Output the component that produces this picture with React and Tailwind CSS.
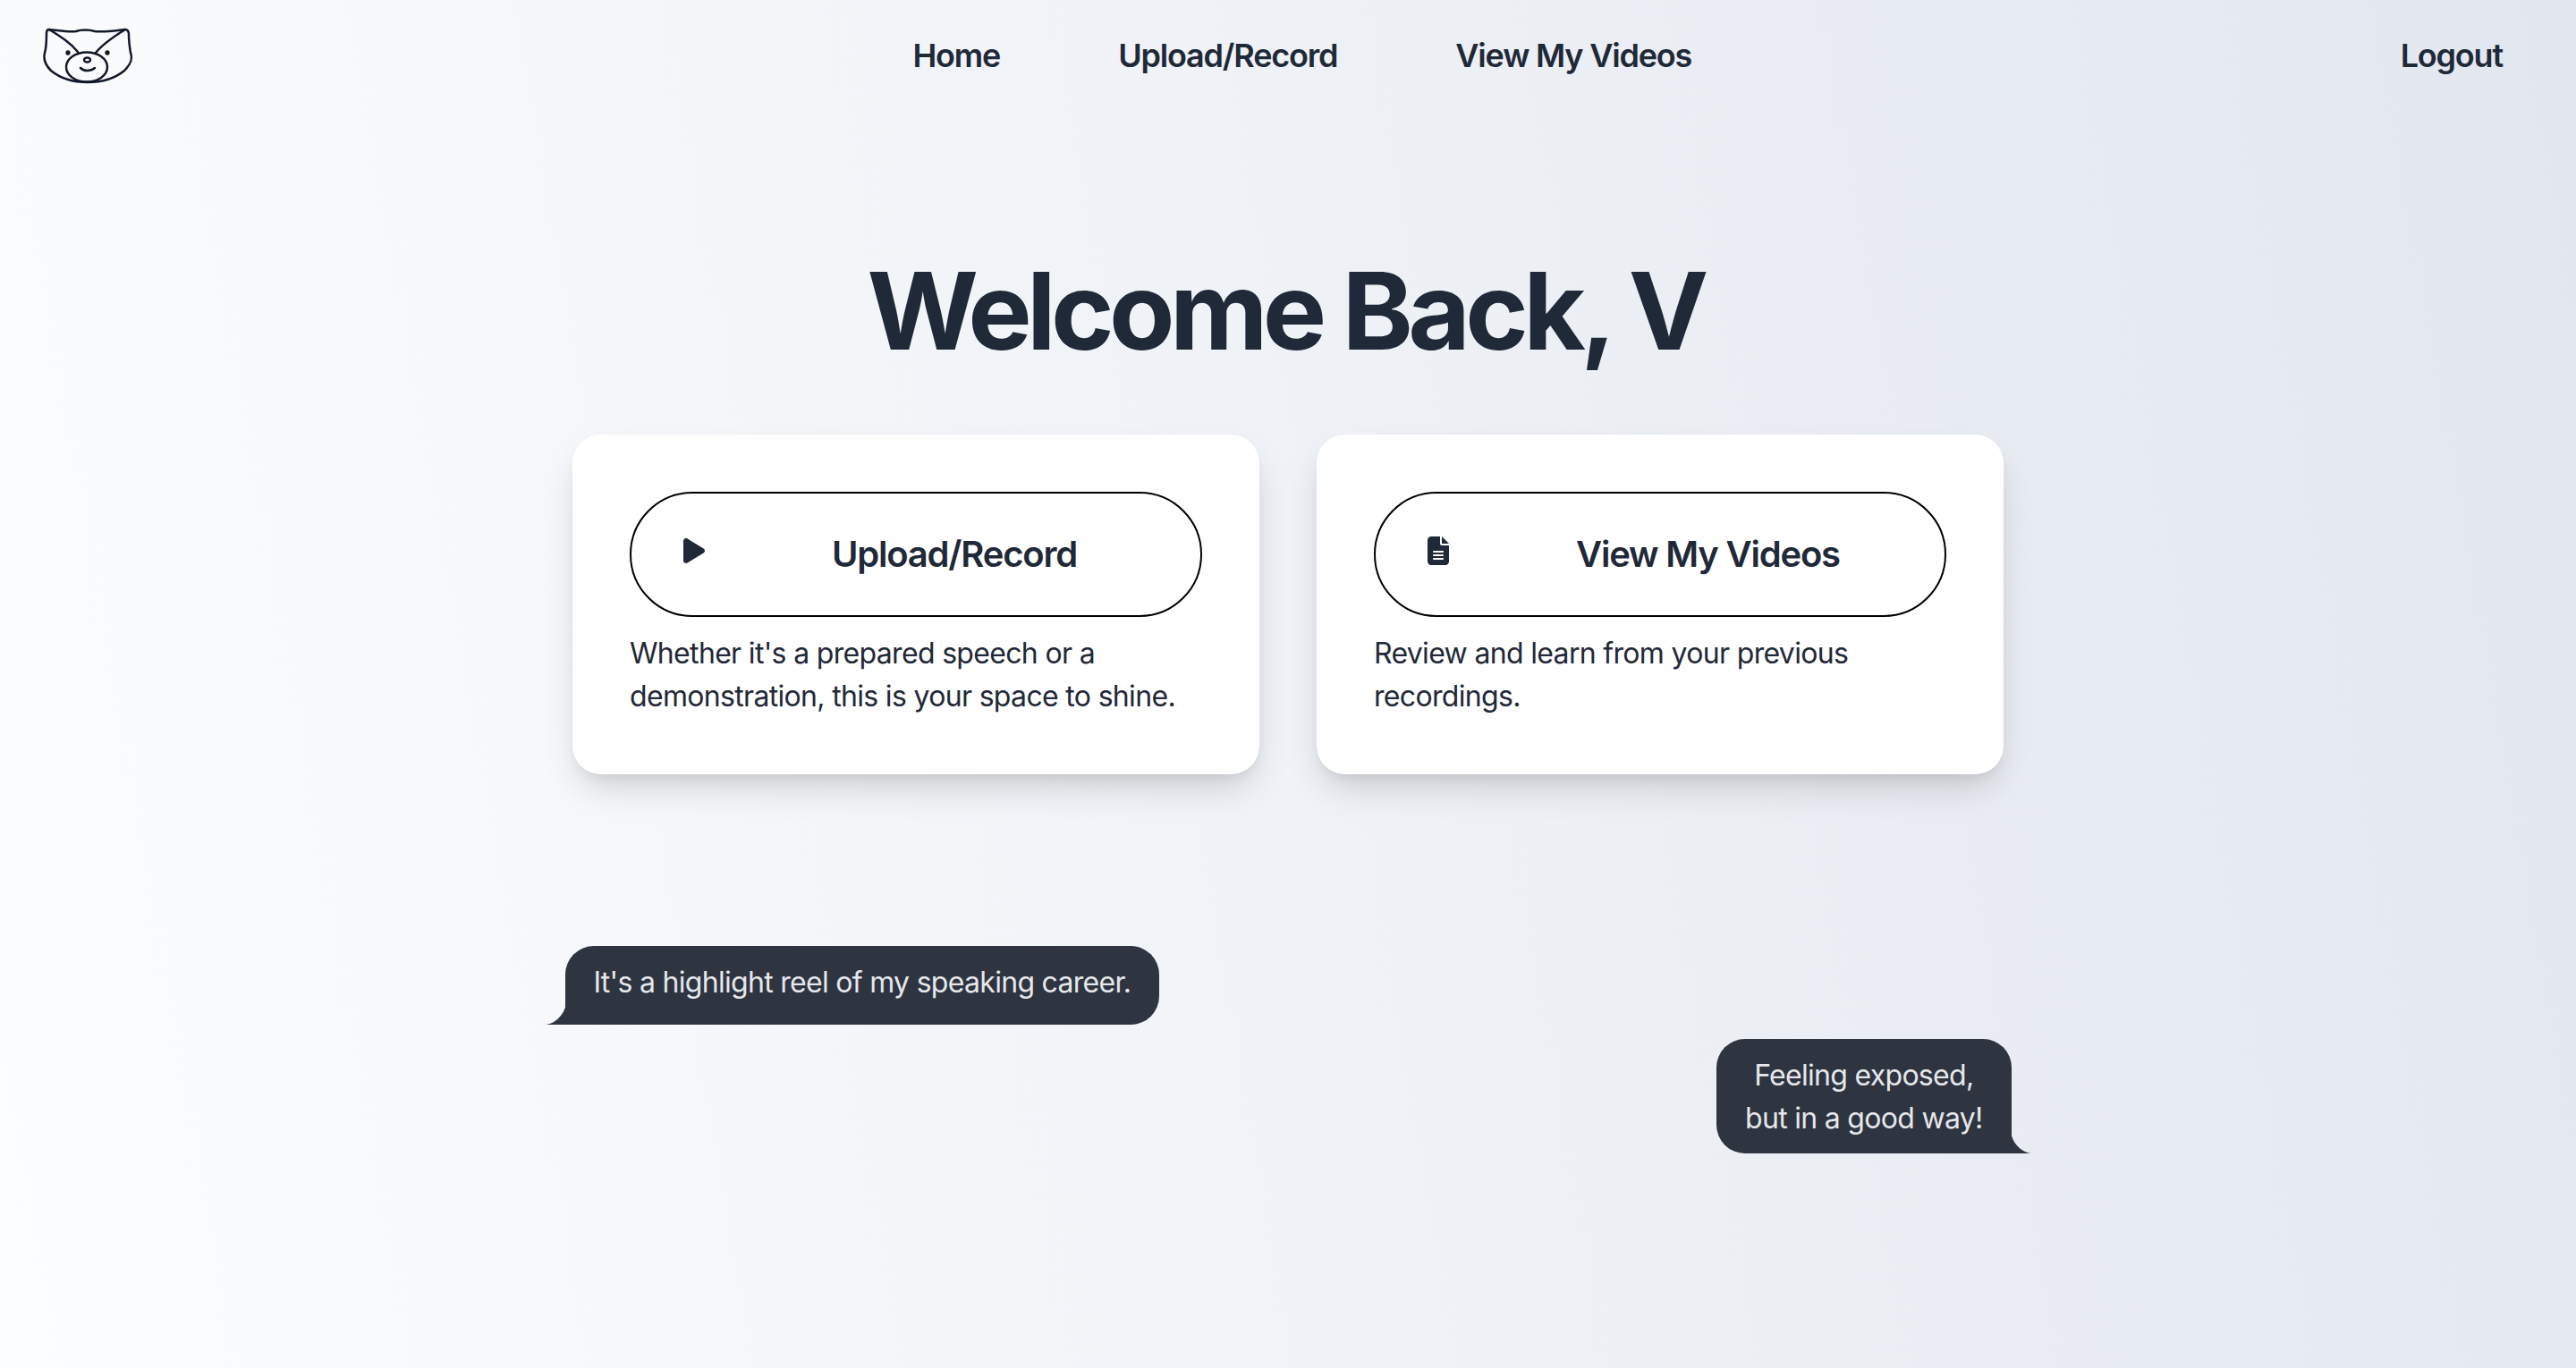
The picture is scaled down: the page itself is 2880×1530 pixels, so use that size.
import { FaFileLines, FaPlay } from "react-icons/fa6";

function Logo() {
  return (
    <svg viewBox="48 28 102 66" className="h-[66px] w-[102px]" fill="none" stroke="#111827" strokeWidth="2.5" strokeLinecap="round" strokeLinejoin="round">
      <path d="M55 32 C66 33 76 35 85 34 C90 32 100 32 106 34 C118 35 130 33 140 32 C143 32 144 34 144 38 C144 46 145 52 146 58 C149 66 145 72 139 78 C128 87 112 91 98 91 C84 91 68 87 57 78 C51 72 48 66 50 58 C52 52 52 44 52 36 C52 33 53 32 55 32 Z" />
      <path d="M55 32 C68 40 79 47 87 57" />
      <path d="M140 32 C127 40 115 48 107 58" />
      <ellipse cx="97" cy="74" rx="23" ry="16.5" />
      <ellipse cx="97.5" cy="66" rx="3.5" ry="2.5" />
      <path d="M90 75 C94 79 101 79 106 75" />
      <circle cx="76" cy="58" r="1.4" fill="#111827" />
      <circle cx="120" cy="58" r="1.4" fill="#111827" />
    </svg>
  );
}

function ActionCard({ icon, title, text }) {
  return (
    <div className="h-[380px] w-[768px] rounded-[32px] bg-white p-16 shadow-[0_20px_40px_-8px_rgba(0,0,0,0.17),0_8px_16px_-8px_rgba(0,0,0,0.1)]">
      <button className="flex h-[140px] w-full items-center rounded-full border-2 border-black bg-white pl-[58px] text-[40px] font-semibold tracking-[-0.03em] text-[#1f2937]">
        <span className="-mt-2 flex w-6 shrink-0 justify-center">{icon}</span>
        <span className="ml-[142px]">{title}</span>
      </button>
      <p className="mt-[17px] text-[32px] leading-[48px] tracking-[-0.021em] text-[#1f2937]">{text}</p>
    </div>
  );
}

export default function App() {
  return (
    <div className="min-h-[1530px] bg-[linear-gradient(80deg,#fcfdfe,#e2e7ef)] font-['Inter',sans-serif]">
      <nav className="flex h-[124px] items-center justify-between pl-12 pr-[82px] text-[36px] font-semibold tracking-[-0.033em] text-[#1f2937]">
        <Logo />
        <div className="ml-[78px] flex gap-[132px]">
          <a>Home</a>
          <a>Upload/Record</a>
          <a>View My Videos</a>
        </div>
        <a>Logout</a>
      </nav>

      <h1 className="mt-[160px] pr-[6px] text-center text-[120px] font-bold leading-[128px] tracking-[-0.047em] text-[#1f2937]">Welcome Back, V</h1>

      <div className="mt-[74px] flex justify-center gap-16">
        <ActionCard
          icon={<FaPlay size={32} />}
          title="Upload/Record"
          text="Whether it's a prepared speech or a demonstration, this is your space to shine."
        />
        <ActionCard
          icon={<FaFileLines size={32} />}
          title="View My Videos"
          text="Review and learn from your previous recordings."
        />
      </div>

      <div className="mx-auto mt-[192px] flex w-[1617px] flex-col items-start text-[32px] leading-[48px] tracking-[-0.022em] text-gray-200">
        <div className="relative rounded-[32px] rounded-bl-none bg-[#2e3440] px-8 pb-[23px] pt-[17px]">
          It's a highlight reel of my speaking career.
          <svg viewBox="0 0 24 24" className="absolute bottom-0 left-[-23px] h-6 w-6" fill="#2e3440">
            <path d="M24 0 V24 H0 C10 24 22 14 24 0 Z" />
          </svg>
        </div>
        <div className="relative mt-4 self-end rounded-[32px] rounded-br-none bg-[#2e3440] px-8 pb-[15px] pt-[17px] text-center">
          Feeling exposed,
          <br />
          but in a good way!
          <svg viewBox="0 0 24 24" className="absolute bottom-0 right-[-23px] h-6 w-6" fill="#2e3440">
            <path d="M0 0 V24 H24 C14 24 2 14 0 0 Z" />
          </svg>
        </div>
      </div>
    </div>
  );
}
